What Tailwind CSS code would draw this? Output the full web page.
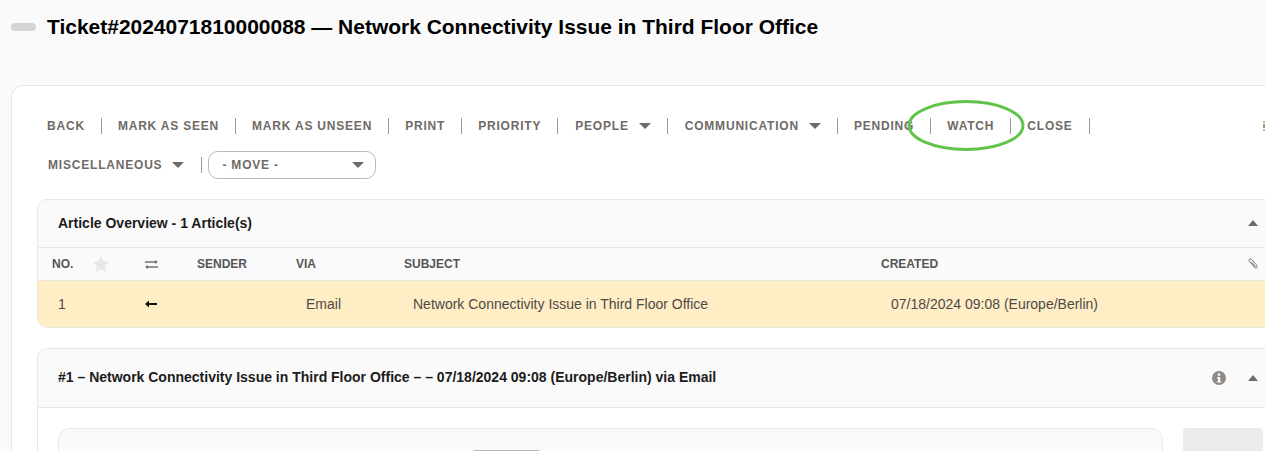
<!DOCTYPE html>
<html lang="en">
  <head>
    <meta charset="UTF-8" />
    <title>Ticket#2024071810000088</title>
    <script src="https://cdn.jsdelivr.net/npm/@tailwindcss/browser@4"></script>
  </head>
  <body class="h-[451px] overflow-hidden bg-[#fafafa] font-['Liberation_Sans',Arial,sans-serif] text-black">
    <!-- title -->
    <header class="flex h-[85px] items-start">
      <span class="ml-[11px] mt-[23px] h-[8px] w-[25px] rounded-full bg-[#d4d4d4]"></span>
      <h1 class="ml-[11px] mt-[15px] text-[20.98px] leading-[24px] font-bold whitespace-nowrap">Ticket#2024071810000088 — Network Connectivity Issue in Third Floor Office</h1>
    </header>

    <!-- main box -->
    <main class="relative ml-[11px] h-[366px] w-[1254px] overflow-hidden rounded-tl-[12px] border-t border-l border-[#e9e7e1] bg-white pl-[25px] pt-[29px]">
      <!-- actions -->
      <nav class="flex h-[22px] items-center whitespace-nowrap text-[12px] font-bold tracking-[0.8px] text-[#6f6a66]">
        <a class="pl-[10px] pr-[16px]">BACK</a>
        <i class="h-[16px] w-px bg-[#a09a94]"></i>
        <a class="pl-[16px] pr-[16px]">MARK AS SEEN</a>
        <i class="h-[16px] w-px bg-[#a09a94]"></i>
        <a class="pl-[16px] pr-[16px]">MARK AS UNSEEN</a>
        <i class="h-[16px] w-px bg-[#a09a94]"></i>
        <a class="pl-[16px] pr-[16px]">PRINT</a>
        <i class="h-[16px] w-px bg-[#a09a94]"></i>
        <a class="pl-[16px] pr-[16px]">PRIORITY</a>
        <i class="h-[16px] w-px bg-[#a09a94]"></i>
        <a class="flex items-center pl-[17px] pr-[16px]">PEOPLE<span class="ml-[10px] h-0 w-0 border-x-[6px] border-t-[6px] border-x-transparent border-t-[#6f6a66]"></span></a>
        <i class="h-[16px] w-px bg-[#a09a94]"></i>
        <a class="flex items-center pl-[17px] pr-[16px]">COMMUNICATION<span class="ml-[10px] h-0 w-0 border-x-[6px] border-t-[6px] border-x-transparent border-t-[#6f6a66]"></span></a>
        <i class="h-[16px] w-px bg-[#a09a94]"></i>
        <a class="pl-[16px] pr-[16px]">PENDING</a>
        <i class="h-[16px] w-px bg-[#a09a94]"></i>
        <a class="pl-[16px] pr-[16px]">WATCH</a>
        <i class="h-[16px] w-px bg-[#a09a94]"></i>
        <a class="pl-[16px] pr-[16px]">CLOSE</a>
        <i class="h-[16px] w-px bg-[#a09a94]"></i>
      </nav>
      <div class="mt-[14px] flex h-[28px] items-center whitespace-nowrap text-[12px] font-bold tracking-[0.8px] text-[#6f6a66]">
        <a class="flex items-center pl-[11px] pr-[17px]">MISCELLANEOUS<span class="ml-[10px] h-0 w-0 border-x-[6px] border-t-[6px] border-x-transparent border-t-[#6f6a66]"></span></a>
        <i class="h-[16px] w-px bg-[#a09a94]"></i>
        <div class="ml-[6px] flex h-[28px] w-[168px] items-center justify-between rounded-[10px] border border-[#bdb8b1] pl-[13px] pr-[11px]">
          <span>- MOVE -</span>
          <span class="h-0 w-0 border-x-[6px] border-t-[6px] border-x-transparent border-t-[#6f6a66]"></span>
        </div>
      </div>

      <!-- article overview -->
      <section class="mt-[20px] h-[129px] w-[1300px] overflow-hidden rounded-[10px] border border-[#e9e7e1] bg-[#fafafa]">
        <div class="flex h-[48px] items-center border-b border-[#e9e7e1] pl-[20px] text-[14px] font-bold text-[#1c1c1c]">Article Overview - 1 Article(s)</div>
        <div class="flex h-[33px] items-center border-b border-[#e9e7e1] text-[12px] font-bold text-[#555]">
          <span class="ml-[14px] w-[40px]">NO.</span>
          <svg class="h-[18px] w-[18px]" viewBox="0 0 24 24" fill="#e9e7e3"><path d="M12 1l3.400 7.200 7.900 1-5.800 5.500 1.500 7.800-7-3.800-7 3.800 1.500-7.800L.7 9.200l7.900-1z" /></svg>
          <svg class="ml-[35px] h-[9px] w-[13px]" viewBox="0 0 13 9" fill="#77716c"><path d="M0 1.300h10V0l3 2-3 2V2.800H0zM13 6.300H3V5L0 7l3 2V7.800h10z" /></svg>
          <span class="ml-[39px] w-[99px]">SENDER</span>
          <span class="w-[108px]">VIA</span>
          <span class="w-[477px]">SUBJECT</span>
          <span>CREATED</span>
        </div>
        <div class="flex h-[46px] items-center bg-[#ffedc6] text-[14px] text-[#4f4a46]">
          <span class="ml-[20px] w-[87px]">1</span>
          <svg class="h-[8px] w-[12px]" viewBox="0 0 12 8" fill="#111"><path d="M0 4l4-3.500V3h8v2H4v2.500z" /></svg>
          <span class="ml-[149px] w-[107px]">Email</span>
          <span class="w-[478px]">Network Connectivity Issue in Third Floor Office</span>
          <span>07/18/2024 09:08 (Europe/Berlin)</span>
        </div>
      </section>

      <!-- article -->
      <section class="mt-[20px] h-[140px] w-[1300px] rounded-t-[10px] border border-[#e9e7e1]">
        <div class="flex h-[59px] items-center rounded-t-[10px] border-b border-[#e9e7e1] bg-[#fafafa] pb-[2px] pl-[20px] text-[14px] font-bold text-[#1c1c1c]">#1 – Network Connectivity Issue in Third Floor Office – – 07/18/2024 09:08 (Europe/Berlin) via Email</div>
        <div class="flex pl-[20px] pt-[20px]">
          <div class="relative h-[60px] w-[1105px] rounded-[12px] border border-[#ece9e4] bg-[#fafafa]">
            <span class="absolute left-[414px] top-[21px] h-[2px] w-[67px] rounded-t bg-[#bdb8b1]"></span>
          </div>
          <div class="ml-[20px] h-[60px] w-[80px] rounded-[4px] bg-[#ebebeb]"></div>
        </div>
      </section>

      <!-- overlays -->
      <svg class="absolute left-[1251px] top-[35px] h-[10px] w-[2px]" viewBox="0 0 2 10"><rect width="2" height="2" fill="#f0b060" /><rect y="3" width="2" height="4" fill="#9a948e" /><rect y="8" width="2" height="2" fill="#f0b060" /></svg>
      <svg class="absolute left-[894px] top-[14px] h-[52px] w-[120px]" viewBox="0 0 120 52" fill="none"><ellipse cx="60" cy="25.500" rx="57" ry="24" stroke="#62c34a" stroke-width="3" /></svg>
      <span class="absolute left-[1236px] top-[134px] h-0 w-0 border-x-[5px] border-b-[6px] border-x-transparent border-b-[#6f6a66]"></span>
      <svg class="absolute left-[1236px] top-[172px] h-[11px] w-[10px]" viewBox="0 0 10 11" fill="none" stroke="#77716c" stroke-width="1"><path d="M7.500 10.300 1.300 3.300a1.500 1.500 0 0 1 2.400-1.900l5 5.800a2 2 0 0 1-.2 2.800 2 2 0 0 1-1 .3M3.300 3.800l4.200 5" /></svg>
      <svg class="absolute left-[1200px] top-[285px] h-[14px] w-[14px]" viewBox="0 0 14 14"><circle cx="7" cy="7" r="7" fill="#8f8a85" /><rect x="5.800" y="2.500" width="2.400" height="2.200" fill="#fff" /><path d="M5 6h3.200v4.200H9.200v1.300H5v-1.300h1V7.300H5z" fill="#fff" /></svg>
      <span class="absolute left-[1236px] top-[289px] h-0 w-0 border-x-[5px] border-b-[6px] border-x-transparent border-b-[#6f6a66]"></span>
    </main>
  </body>
</html>
